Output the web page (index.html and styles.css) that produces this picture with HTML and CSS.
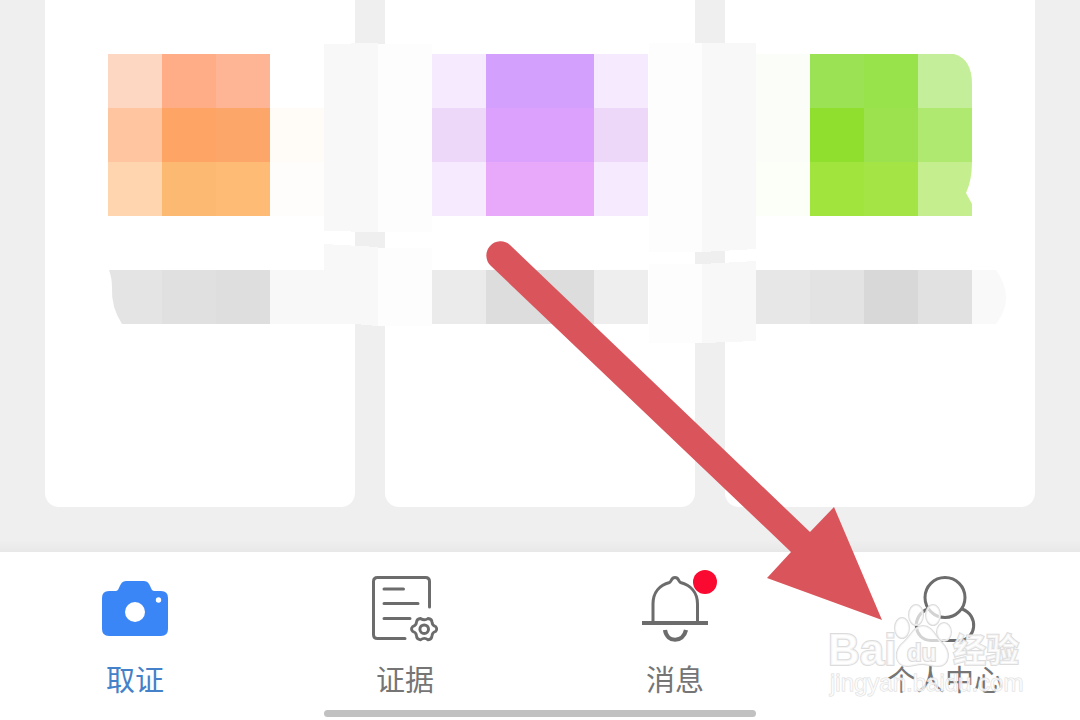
FILE: index.html
```html
<!DOCTYPE html>
<html lang="zh-CN">
  <head>
    <meta charset="UTF-8" />
    <meta name="viewport" content="width=device-width, initial-scale=1.0" />
    <title>取证</title>
    <link rel="stylesheet" href="styles.css">
  </head>
  <body>
    <main class="cards">
      <div class="card"></div>
      <div class="card"></div>
      <div class="card"></div>
    </main>

    <nav class="tabbar">
      <a class="tab active" href="#evidence">
        <svg class="icon" viewBox="0 0 66 66" aria-hidden="true">
          <path fill="#3b86f7" d="M7 15h7c4 0 3-10 10-10h18c7 0 6 10 10 10h7q7 0 7 7v31q0 7-7 7H7q-7 0-7-7V22q0-7 7-7z" />
          <circle cx="33" cy="36" r="10" fill="#fff" />
          <circle cx="56.500" cy="24" r="2.700" fill="#fff" />
        </svg>
        <span class="label">取证</span>
      </a>
      <a class="tab" href="#files">
        <svg class="icon line" viewBox="0 0 66 66" aria-hidden="true">
          <path d="M57.500 31V5.500q0-4-4-4H5.500q-4 0-4 4v53q0 4 4 4H33M12 13h19.500M12 27.500h34M12 42.500h26" />
          <path stroke-width="2.800" d="M48.500 42.500q4 2.600 7.500 0q4 .3 4 3.700q.2 3.200 3.500 4.300q2.500 2.500 0 5q-3.300 1-3.500 4.300q-.2 3.500-4 4q-3.500-2.800-7.500 0q-4-.5-4-4q-.2-3.300-3.700-4.300q-2.500-2.500 0-5q3.500-1.100 3.700-4.300q.2-3.400 4-3.700z" />
          <circle cx="52.200" cy="53.200" r="4.300" />
        </svg>
        <span class="label">证据</span>
      </a>
      <a class="tab" href="#messages">
        <svg class="icon line" viewBox="0 0 66 66" aria-hidden="true">
          <path d="M11 46V28C11 16 18 9 27.500 6.500C30 5 29 1.500 33 1.500S36 5 38.500 6.500C48 9 55.500 16 55.500 28V46" />
          <path stroke-width="4" stroke-linecap="butt" d="M0 47h66" />
          <path stroke-width="4.200" stroke-linecap="butt" d="M23 54c2 13 18 13 21 0" />
        </svg>
        <span class="dot"></span>
        <span class="label">消息</span>
      </a>
      <a class="tab" href="#me">
        <svg class="icon line" viewBox="0 0 66 66" aria-hidden="true">
          <circle cx="33" cy="21.500" r="20" />
          <path d="M16 33C-1 39 1 64 19 64.500H47C65 64 67 39 50 33" />
        </svg>
        <span class="label">个人中心</span>
      </a>
    </nav>
    <div class="home-bar"></div>

    <!-- pixelated blocks that hide the entries of the cards, and the arrow -->
    <svg class="overlay" viewBox="0 0 1080 720" aria-hidden="true">
      <g shape-rendering="crispEdges">
        <path fill="#f8f8f8" d="M324 44l54-1v189l-54-1zM324 244l54 3v79l-23-2h-85v-54h54z" />
        <path fill="#fdfdfd" d="M378 44h54v188h-54zM378 248h54v78h-54z" />
        <path fill="#f8f8f8" d="M702 43h54v206l-54 3zM702 264l54-3v80l-54 2z" />
        <path fill="#fdfdfd" d="M649 43h53v209h-53zM649 264h53v79h-53z" />
        <path fill="#fffcf7" d="M270 108h54v54h-54z" />
        <path fill="#fefdfb" d="M270 162h54v54h-54z" />
        <path fill="#fbfdf8" d="M756 54h54v108h-54z" />
        <path fill="#fcfff7" d="M756 162h54v54h-54z" />

        <path fill="#fed7c3" d="M108 54h54v54h-54z" />
        <path fill="#ffad87" d="M162 54h54v54h-54z" />
        <path fill="#fdb595" d="M216 54h54v54h-54z" />
        <path fill="#ffc4a0" d="M108 108h54v54h-54z" />
        <path fill="#fea566" d="M162 108h54v54h-54z" />
        <path fill="#fca66a" d="M216 108h54v54h-54z" />
        <path fill="#fed5ae" d="M108 162h54v54h-54z" />
        <path fill="#fcb971" d="M162 162h54v54h-54z" />
        <path fill="#fdbb76" d="M216 162h54v54h-54z" />

        <path fill="#f6ebfe" d="M432 54h216v54H432zM432 162h216v54H432z" />
        <path fill="#eed8f9" d="M432 108h216v54H432z" />
        <path fill="#d3a0fe" d="M486 54h108v54H486z" />
        <path fill="#dca1fc" d="M486 108h108v54H486z" />
        <path fill="#e9a9fa" d="M486 162h108v54H486z" />

        <path fill="#9be254" d="M810 54h54v54h-54z" />
        <path fill="#98e34c" d="M864 54h54v54h-54z" />
        <path fill="#90df2e" d="M810 108h54v54h-54z" />
        <path fill="#9ce24e" d="M864 108h54v54h-54z" />
        <path fill="#afe970" d="M918 108h54v54h-54z" />
        <path fill="#a0e43d" d="M810 162h54v54h-54z" />
        <path fill="#a4e444" d="M864 162h54v54h-54z" />

        <path fill="#e0e0e0" d="M162 270h54v54h-54z" />
        <path fill="#dedede" d="M216 270h54v54h-54z" />
        <path fill="#ebebeb" d="M432 270h54v54h-54z" />
        <path fill="#dddddd" d="M486 270h108v54H486z" />
        <path fill="#eeeeee" d="M594 270h54v54h-54z" />
        <path fill="#e7e7e7" d="M756 270h54v54h-54z" />
        <path fill="#e3e3e3" d="M810 270h54v54h-54z" />
        <path fill="#d8d8d8" d="M864 270h54v54h-54z" />
        <path fill="#e1e1e1" d="M918 270h54v54h-54z" />
      </g>
      <path fill="#c5ee9a" d="M918 54h36q18 5 18 30v24h-54z" />
      <path fill="#c5ef8e" d="M918 162h54q0 18-6 31l6 11v12h-54z" />
      <path fill="#e4e4e4" d="M109 270h53v54h-40q-11-17-10-36q0-10-3-18z" />
      <path fill="#f9f9f9" d="M972 270h24q20 28 0 54h-24z" />

      <path fill="#da555b" d="M491 266A14 14 0 0 1 510 245L810 532L834 507L882 620L767 578L791 552z" />
    </svg>

    <svg class="watermark" viewBox="0 0 200 100">
      <g class="mark">
        <text class="brand" x="0" y="65">Bai</text>
        <ellipse cx="74" cy="28" rx="7" ry="10" />
        <ellipse cx="88" cy="15" rx="7" ry="10" />
        <ellipse cx="105" cy="15" rx="7" ry="10" />
        <ellipse cx="116" cy="32" rx="7" ry="9" />
        <path d="M95 26c9 0 12 10 18 16c11 10 8 24-3 24c-7 0-10-2-16-2s-9 2-15 2c-12 0-14-15-3-24c7-6 10-16 19-16z" />
        <text class="du" x="79" y="61">du</text>
        <text class="brand-cn" x="125" y="62">经验</text>
        <text class="url" x="2" y="91">jingyan.baidu.com</text>
      </g>
    </svg>
  </body>
</html>
```
FILE: styles.css
```css
* {
  box-sizing: border-box;
}

body {
  position: relative;
  display: flex;
  flex-direction: column;
  min-height: 100vh;
  margin: 0;
  background-color: #fff;
  font-family: "Noto Sans CJK SC", sans-serif;
}

/* the three white cards */
.cards {
  flex: 1;
  display: flex;
  gap: 30px;
  padding: 0 45px 45px;
  background: linear-gradient(to top, #e8e8e8, #efefef 12px);
}

.card {
  flex: 1;
  border-radius: 0 0 14px 14px;
  background-color: #fff;
}

/* bottom tabs */
.tabbar {
  display: flex;
  padding: 24px 0 14px;
}

.tab {
  position: relative;
  flex: 1;
  display: flex;
  flex-direction: column;
  align-items: center;
  gap: 18px;
  color: #757575;
  text-decoration: none;
}

.tab.active {
  color: #4581c8;
}

.icon {
  width: 66px;
  height: 66px;
}

.icon.line {
  fill: none;
  stroke: #6c6c6c;
  stroke-width: 3;
  stroke-linecap: round;
}

.label {
  font-size: 29px;
  line-height: 36px;
}

/* unread mark on the bell */
.dot {
  position: absolute;
  top: -6px;
  left: calc(50% + 18px);
  width: 24px;
  height: 24px;
  border-radius: 50%;
  background-color: #fa0a30;
}

.home-bar {
  width: 40%;
  height: 7px;
  margin: 0 auto 3px;
  border-radius: 4px;
  background-color: #c1c1c1;
}

.overlay {
  position: absolute;
  top: 0;
  left: 0;
  width: 100%;
  pointer-events: none;
}

.watermark {
  position: absolute;
  right: 52px;
  bottom: 20px;
  width: 200px;
  height: 100px;
  pointer-events: none;
}

.mark {
  fill: #fff;
  fill-opacity: 0.7;
  stroke: #dcdcdc;
  stroke-width: 2;
  paint-order: stroke;
  font-family: "Liberation Sans", "Noto Sans CJK SC", sans-serif;
}

.brand {
  font-size: 44px;
  font-weight: bold;
}

.du {
  font-size: 24px;
  font-weight: bold;
}

.brand-cn {
  font-family: "Noto Sans CJK SC", sans-serif;
  font-size: 33px;
  font-weight: bold;
}

.url {
  font-size: 24px;
  stroke-width: 1;
}
```
